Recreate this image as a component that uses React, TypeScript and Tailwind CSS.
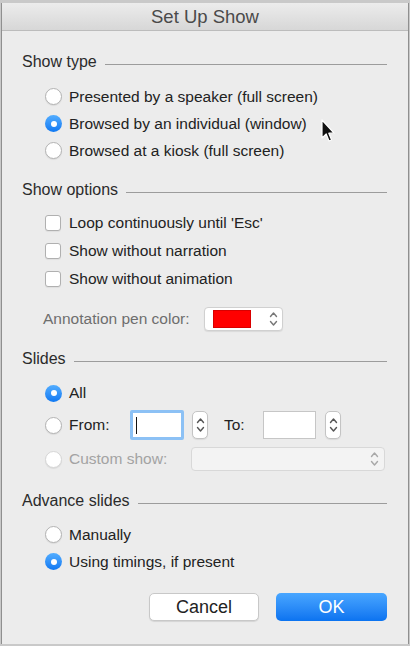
import clsx from 'clsx';

const font = { fontFamily: '"Liberation Sans", Arial, sans-serif' };

function Radio(props: { checked?: boolean, disabled?: boolean }) {
  if (props.checked) {
    return (
      <span className="flex h-[17px] w-[17px] shrink-0 items-center justify-center rounded-full bg-linear-to-b from-[#52adff] to-[#0d78f2]">
        <span className="h-[6px] w-[6px] rounded-full bg-white"/>
      </span>
    );
  }
  return (
    <span
      className={clsx(
        'h-[17px] w-[17px] shrink-0 rounded-full border bg-white shadow-[0_1px_1px_rgba(0,0,0,0.08)]',
        props.disabled ? 'border-[#d6d6d6] bg-[#f6f6f6]' : 'border-[#b3b3b3]'
      )}/>
  );
}

function Checkbox() {
  return <span className="h-[16px] w-[16px] shrink-0 rounded-[3px] border border-[#b0b0b0] bg-white shadow-[0_1px_1px_rgba(0,0,0,0.06)]"/>;
}

function Chevrons(props: { color?: string }) {
  const c = props.color ?? '#555';
  return (
    <svg width="9" height="16" viewBox="0 0 9 16" fill="none" stroke={c} strokeWidth="1.4" strokeLinecap="round" strokeLinejoin="round">
      <path d="M1.5 5.5 L4.5 2 L7.5 5.5"/>
      <path d="M1.5 10.5 L4.5 14 L7.5 10.5"/>
    </svg>
  );
}

function Stepper() {
  return (
    <span className="flex h-[28px] w-[16px] items-center justify-center rounded-[5px] border border-[#c4c4c4] bg-white shadow-[0_1px_1px_rgba(0,0,0,0.08)]">
      <Chevrons/>
    </span>
  );
}

function SectionHeader(props: { title: string, className?: string }) {
  return (
    <div className={clsx('flex h-[20px] items-center pr-[21px]', props.className)}>
      <span className="text-[16px] text-[#2b2b2b]">{props.title}</span>
      <span className="ml-[8px] mt-[5px] h-px flex-1 bg-[#9c9c9c]"/>
    </div>
  );
}

function Option(props: { label: string, checked?: boolean, box?: boolean, h: string }) {
  return (
    <div className={clsx('flex items-center pl-[23px]', props.h)}>
      {props.box ? <Checkbox/> : <Radio checked={props.checked}/>}
      <span className={clsx('text-[15.5px] text-[#222]', props.box ? 'ml-[8px]' : 'ml-[7px]')}>{props.label}</span>
    </div>
  );
}

function Cursor() {
  return (
    <svg className="absolute left-[321px] top-[119px]" width="14" height="24" viewBox="0 0 14 24">
      <path d="M1 1 L1 19 L5.2 15 L8 22 L10.6 21 L7.8 14.2 L13 14.2 Z" fill="#111" stroke="#fff" strokeWidth="1.2" strokeLinejoin="round"/>
    </svg>
  );
}

export default function App() {
  return (
    <div className="relative h-[646px] w-[410px] overflow-hidden bg-[#c9c9c9]" style={font}>
      <div className="mx-[1px] mt-[3px] flex h-[641px] flex-col border-x border-[#8f8f8f] bg-[#ececec]">
        <div className="flex h-[28px] items-center justify-center border-b border-[#bcbcbc] bg-linear-to-b from-[#ececec] to-[#d7d7d7]">
          <span className="text-[18.5px] text-[#4a4a4a]">Set Up Show</span>
        </div>

        <div className="flex flex-col pl-[20px]">
          <SectionHeader title="Show type" className="mt-[21px]"/>
          <div className="mt-[11px] flex flex-col">
            <Option h="h-[27px]" label="Presented by a speaker (full screen)"/>
            <Option h="h-[27px]" checked label="Browsed by an individual (window)"/>
            <Option h="h-[27px]" label="Browsed at a kiosk (full screen)"/>
          </div>

          <SectionHeader title="Show options" className="mt-[16px]"/>
          <div className="mt-[9px] flex flex-col">
            <Option h="h-[28px]" box label="Loop continuously until 'Esc'"/>
            <Option h="h-[28px]" box label="Show without narration"/>
            <Option h="h-[28px]" box label="Show without animation"/>
          </div>

          <div className="mt-[14px] flex h-[24px] items-center pl-[21px]">
            <span className="text-[15.5px] text-[#6e6e6e]">Annotation pen color:</span>
            <div className="ml-[14px] flex h-[24px] w-[79px] items-center rounded-[4px] border border-[#d0d0d0] bg-white pl-[8px] pr-[4px] shadow-[0_1px_1px_rgba(0,0,0,0.08)]">
              <span className="h-[18px] w-[38px] border border-[#d80000] bg-[#ff0000]"/>
              <span className="ml-auto"><Chevrons color="#777"/></span>
            </div>
          </div>

          <SectionHeader title="Slides" className="mt-[18px]"/>
          <div className="mt-[10px] flex flex-col">
            <Option h="h-[28px]" checked label="All"/>
            <div className="mt-[2px] flex h-[32px] items-center pl-[23px]">
              <Radio/>
              <span className="ml-[7px] w-[61px] text-[15.5px] text-[#222]">From:</span>
              <span className="flex h-[30px] w-[54px] items-center rounded-[2px] border-[3px] border-[#8cc1f5] bg-white pl-[3px]">
                <span className="h-[17px] w-px bg-[#111]"/>
              </span>
              <span className="ml-[8px]"><Stepper/></span>
              <span className="ml-[16px] w-[39px] text-[15.5px] text-[#222]">To:</span>
              <span className="h-[28px] w-[53px] border border-[#c6c6c6] bg-white"/>
              <span className="ml-[9px]"><Stepper/></span>
            </div>
            <div className="mt-[6px] flex h-[24px] items-center pl-[23px]">
              <Radio disabled/>
              <span className="ml-[7px] w-[122px] text-[15.5px] text-[#a3a3a3]">Custom show:</span>
              <span className="flex h-[24px] w-[194px] items-center justify-end rounded-[4px] border border-[#d8d8d8] bg-[#f3f3f3] pr-[5px]">
                <Chevrons color="#a8a8a8"/>
              </span>
            </div>
          </div>

          <SectionHeader title="Advance slides" className="mt-[20px]"/>
          <div className="mt-[10px] flex flex-col">
            <Option h="h-[27px]" label="Manually"/>
            <Option h="h-[27px]" checked label="Using timings, if present"/>
          </div>

          <div className="mt-[18px] flex justify-end gap-[17px] pr-[21px]">
            <button className="h-[28px] w-[110px] rounded-[5px] border border-[#c8c8c8] bg-white text-[18px] text-[#222] shadow-[0_1px_1px_rgba(0,0,0,0.1)]">Cancel</button>
            <button className="h-[28px] w-[111px] rounded-[5px] bg-linear-to-b from-[#48a6ff] to-[#0a73f0] text-[18px] text-white">OK</button>
          </div>
        </div>
      </div>
      <Cursor/>
    </div>
  );
}
